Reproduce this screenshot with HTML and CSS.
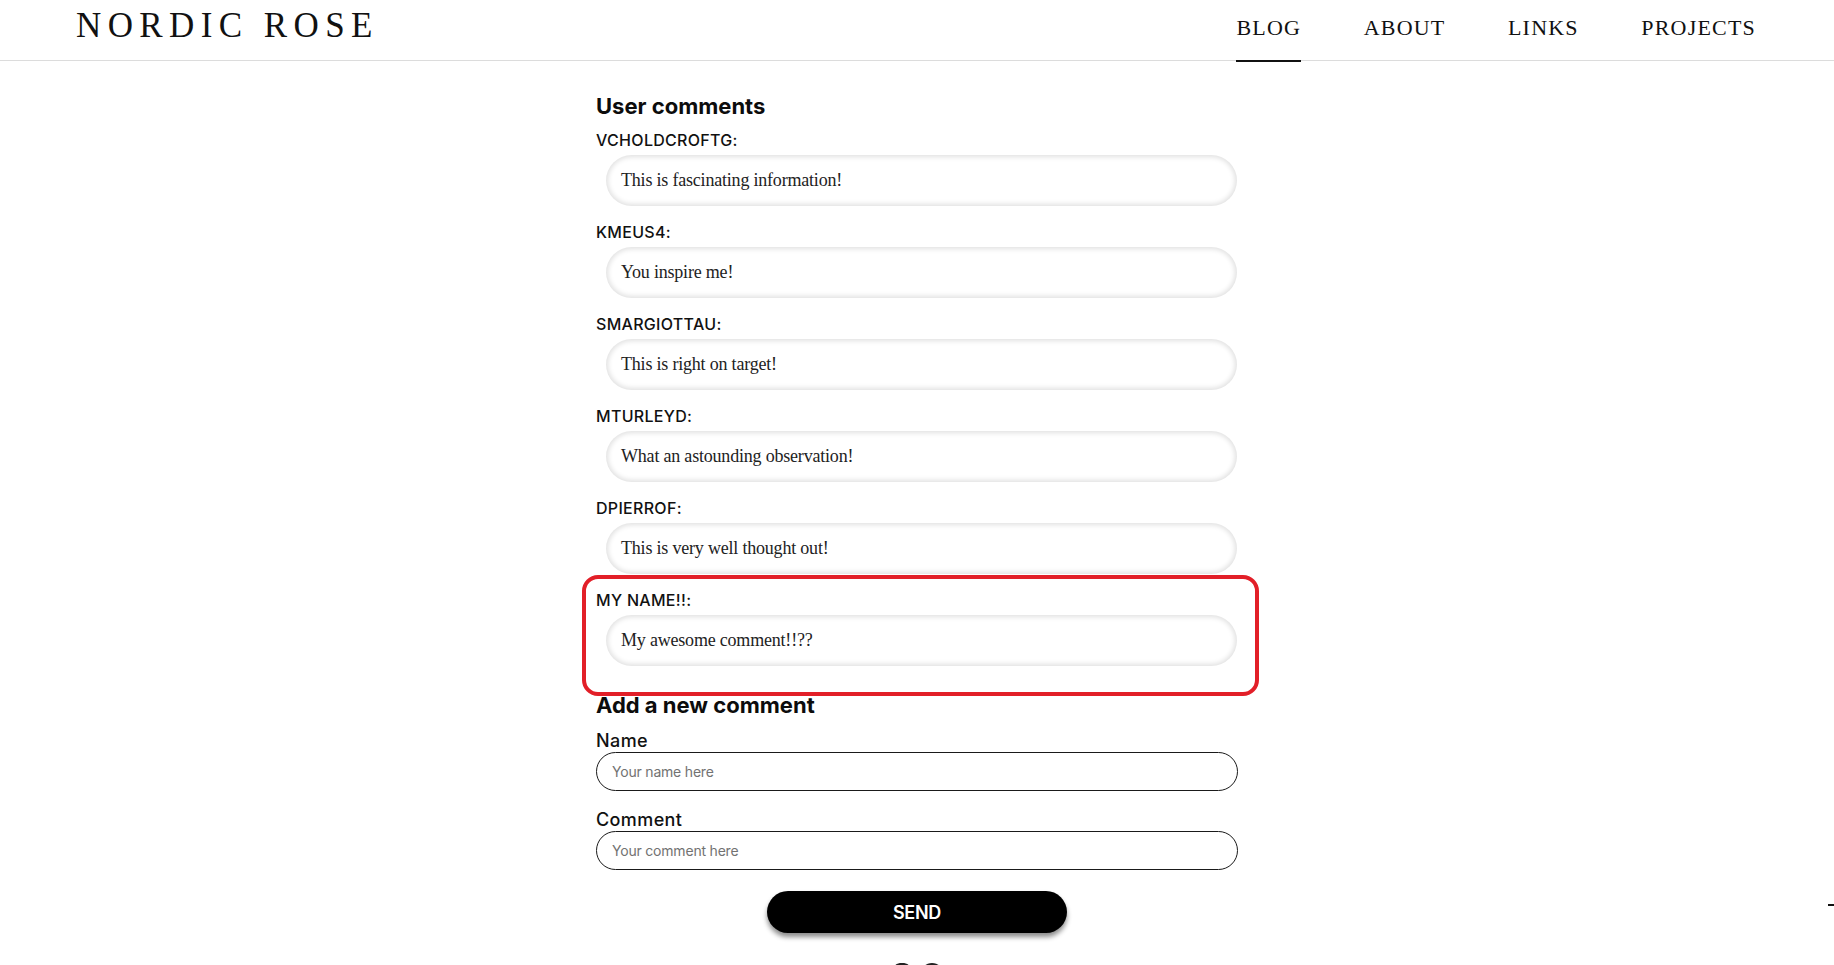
FILE: index.html
```html
<!DOCTYPE html>
<html lang="en">
<head>
<meta charset="utf-8">
<title>Nordic Rose – Comments</title>
<link rel="stylesheet" href="styles.css">
</head>
<body>
<header class="site-header">
  <a class="logo" href="#">NORDIC ROSE</a>
  <nav class="nav">
    <a class="nav-link is-active" href="#">BLOG</a>
    <a class="nav-link" href="#">ABOUT</a>
    <a class="nav-link" href="#">LINKS</a>
    <a class="nav-link" href="#">PROJECTS</a>
  </nav>
</header>

<main class="content">
  <section class="comments">
    <h2 class="section-title comments-title">User comments</h2>
    <div class="comment">
      <div class="comment-author">VCHOLDCROFTG:</div>
      <div class="comment-body">This is fascinating information!</div>
    </div>
    <div class="comment">
      <div class="comment-author">KMEUS4:</div>
      <div class="comment-body">You inspire me!</div>
    </div>
    <div class="comment">
      <div class="comment-author">SMARGIOTTAU:</div>
      <div class="comment-body">This is right on target!</div>
    </div>
    <div class="comment">
      <div class="comment-author">MTURLEYD:</div>
      <div class="comment-body">What an astounding observation!</div>
    </div>
    <div class="comment">
      <div class="comment-author">DPIERROF:</div>
      <div class="comment-body">This is very well thought out!</div>
    </div>
    <div class="comment comment-highlight">
      <div class="comment-author">MY NAME!!:</div>
      <div class="comment-body">My awesome comment!!??</div>
    </div>
  </section>

  <form class="comment-form">
    <h2 class="section-title form-title">Add a new comment</h2>
    <label class="field-label" for="name">Name</label>
    <input class="field-input" id="name" type="text" placeholder="Your name here">
    <label class="field-label" for="comment">Comment</label>
    <input class="field-input" id="comment" type="text" placeholder="Your comment here">
    <button class="send-btn" type="button">SEND</button>
  </form>

  <footer class="footer-icons">
    <svg class="footer-icon" viewBox="0 0 22 22" aria-hidden="true"><circle cx="11" cy="11" r="10" fill="none" stroke="#222" stroke-width="2.4"/></svg>
    <svg class="footer-icon" viewBox="0 0 22 22" aria-hidden="true"><circle cx="11" cy="11" r="11" fill="#222"/></svg>
  </footer>
</main>
<span class="edge-mark"></span>
</body>
</html>
```

FILE: styles.css
```css
* { box-sizing: border-box; }

html, body {
  margin: 0;
  padding: 0;
  background: #ffffff;
}

body {
  font-family: Inter, "Liberation Sans", Arial, sans-serif;
  color: #111;
  position: relative;
  min-height: 965px;
  overflow: hidden;
}

/* ---------- header ---------- */
.site-header {
  height: 61px;
  border-bottom: 1px solid #dcdcdc;
  display: flex;
  justify-content: space-between;
  align-items: stretch;
  padding: 0 78px 0 76px;
}

.logo {
  font-family: "Liberation Serif", "Times New Roman", serif;
  font-size: 35px;
  letter-spacing: 6.4px;
  color: #111;
  text-decoration: none;
  padding-top: 6px;
  line-height: normal;
}

.nav {
  display: flex;
  gap: 62.5px;
}

.nav-link {
  position: relative;
  display: block;
  font-family: "Liberation Serif", "Times New Roman", serif;
  font-size: 22px;
  letter-spacing: 1.2px;
  color: #111;
  text-decoration: none;
  padding-top: 15px;
  line-height: normal;
}

.nav-link.is-active::after {
  content: "";
  position: absolute;
  left: 0;
  right: 0;
  bottom: -2px;
  height: 2px;
  background: #111;
}

/* ---------- content ---------- */
.content {
  width: 642px;
  margin: 0 auto;
}

.section-title {
  font-family: Inter, "Liberation Sans", sans-serif;
  font-weight: 700;
  font-size: 22px;
  line-height: 28px;
  letter-spacing: 0;
  color: #0c0c0c;
  margin: 0;
}

.comments-title {
  margin-top: 31px;
  margin-bottom: 10px;
}

.comment {
  margin-bottom: 16px;
}

.comment-author {
  font-size: 16px;
  font-weight: 500;
  line-height: 20px;
  letter-spacing: 0.3px;
  color: #111;
  margin-bottom: 5px;
}

.comment-body {
  height: 51px;
  margin-left: 10px;
  margin-right: 1px;
  border-radius: 26px;
  background: #fff;
  box-shadow: inset 0 0 5px 2px rgba(0, 0, 0, 0.12);
  display: flex;
  align-items: center;
  padding: 0 15px;
  font-family: "Liberation Serif", "Times New Roman", serif;
  font-size: 18px;
  letter-spacing: -0.2px;
  color: #222;
}

.comment-highlight {
  position: relative;
}

.comment-highlight::after {
  content: "";
  position: absolute;
  top: -15px;
  left: -14px;
  right: -21px;
  bottom: -30px;
  border: 4px solid #e21f28;
  border-radius: 16px;
  pointer-events: none;
}

/* ---------- form ---------- */
.comment-form {
  display: flex;
  flex-direction: column;
}

.form-title {
  margin-top: 9px;
  margin-bottom: 12px;
}

.field-label {
  font-size: 18px;
  font-weight: 500;
  line-height: 20px;
  letter-spacing: 0.4px;
  color: #111;
  margin-bottom: 1px;
}

.field-input {
  height: 39px;
  width: 100%;
  border: 1px solid #1a1a1a;
  border-radius: 20px;
  padding: 0 15px;
  font-family: Inter, "Liberation Sans", sans-serif;
  font-size: 14px;
  color: #222;
  background: #fff;
  margin-bottom: 19px;
  outline: none;
}

.field-input::placeholder {
  color: #727272;
  letter-spacing: -0.2px;
}

.send-btn {
  align-self: center;
  width: 300px;
  height: 42px;
  margin-top: 2px;
  border: none;
  border-radius: 21px;
  background: #000;
  color: #fff;
  font-family: Inter, "Liberation Sans", sans-serif;
  font-size: 18px;
  font-weight: 600;
  letter-spacing: -0.3px;
  box-shadow: 0 4px 5px rgba(0, 0, 0, 0.45);
  cursor: pointer;
}

.footer-icons {
  display: flex;
  justify-content: center;
  gap: 8px;
  margin-top: 30px;
}

.footer-icon {
  width: 22px;
  height: 22px;
  display: block;
}

.edge-mark {
  position: absolute;
  top: 904px;
  right: 0;
  width: 6px;
  height: 2px;
  background: #111;
}
```
